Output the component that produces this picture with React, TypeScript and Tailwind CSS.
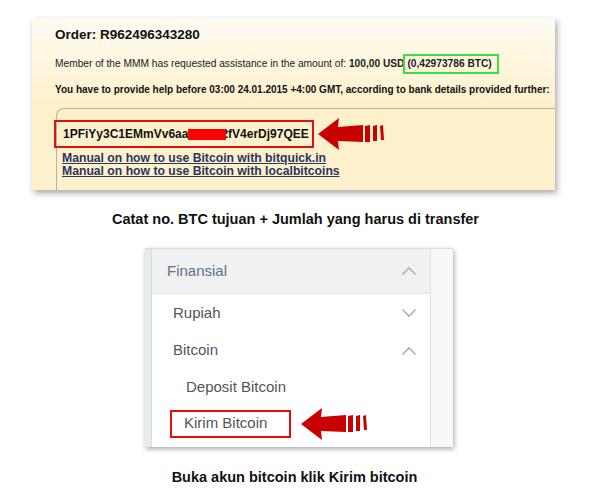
import React from 'react'

// panah merah penunjuk
function RedArrow() {
  return (
    <svg width="70" height="34" viewBox="0 0 70 34">
      <path d="M0 17 L21 1 L20 10 L45 8 L45 25 L20 24 L21 33 Z" fill="#c80000" />
      <path d="M47 9 L52 8 L52 25 L47 25 Z" fill="#c80000" />
      <path d="M55 9 L59 8 L59 24 L55 24 Z" fill="#c80000" />
      <path d="M62 9 L65 8 L66 23 L63 23 Z" fill="#c80000" />
    </svg>
  )
}

function Chevron({ up }: { up?: boolean }) {
  return (
    <svg width="16" height="10" viewBox="0 0 16 10">
      <path
        d={up ? 'M1.5 8.5 L8 2 L14.5 8.5' : 'M1.5 1.5 L8 8 L14.5 1.5'}
        fill="none"
        stroke="#a9b3bd"
        strokeWidth="1.6"
      />
    </svg>
  )
}

export default function App() {
  const arial = { fontFamily: '"Liberation Sans", Arial, sans-serif' }

  return (
    <div className="w-[597px] h-[494px] bg-white overflow-hidden" style={arial}>
      {/* panel order */}
      <div className="ml-[32px] mt-[18px] w-[523px] h-[172px] bg-gradient-to-b from-[#fefbf2] via-[#fdf1cc] to-[#fdf1cd] shadow-[2px_3px_6px_rgba(0,0,0,0.35)] pl-[23px] pt-[9px] overflow-hidden">
        <div className="text-[13.5px] leading-[16px] font-bold text-[#111]">Order: R962496343280</div>
        <div className="mt-[11px] h-[20px] flex items-center text-[10.2px] text-[#222] whitespace-nowrap">
          <span>Member of the MMM has requested assistance in the amount of:&nbsp;</span>
          <span className="font-bold">100,00 USD</span>
          <span className="font-bold border-2 border-[#3ee03e] h-[20px] flex items-center pl-[2px] pr-[5px] -ml-[1px]">(0,42973786 BTC)</span>
        </div>
        <div className="mt-[8px] text-[10px] leading-[16px] font-bold text-[#111] whitespace-nowrap">
          You have to provide help before 03:00 24.01.2015 +4:00 GMT, according to bank details provided further:
        </div>
        <div className="mt-[10px] ml-[1px] h-[100px] border-t border-l border-[#b9b2a2] rounded-tl-[8px] pt-[8px]">
          <div className="flex items-center">
            <div className="-ml-[3px] w-[260px] h-[28px] border-2 border-[#e01010] flex items-center pl-[7px] text-[12px] font-bold text-[#111] whitespace-nowrap">
              <span>1PFiYy3C1EMmVv6aa</span>
              <span className="relative z-10 inline-block w-[38px] h-[11px] bg-[#ff0000] -mr-[5px]" />
              <span>2fV4erDj97QEE</span>
            </div>
            <div className="ml-[4px]">
              <RedArrow />
            </div>
          </div>
          <div className="mt-[1px] ml-[5px] text-[12.2px] leading-[13px] font-bold text-[#2b3560] underline">
            <div>Manual on how to use Bitcoin with bitquick.in</div>
            <div>Manual on how to use Bitcoin with localbitcoins</div>
          </div>
        </div>
      </div>

      <div className="mt-[21px] text-center pr-[6px] text-[14.5px] leading-[17px] font-bold text-[#111]">
        Catat no. BTC tujuan + Jumlah yang harus di transfer
      </div>

      {/* panel menu */}
      <div className="ml-[145px] mt-[20px] w-[308px] h-[199px] flex shadow-[1px_2px_5px_rgba(0,0,0,0.35)] border-t border-[#ddd]">
        <div className="w-[7px] bg-[#e6ebf0] border-r border-[#d6dce2]" />
        <div className="w-[278px] bg-white flex flex-col">
          <div className="h-[45px] bg-[#f1f1f1] flex items-center justify-between pl-[15px] pr-[13px] border-b border-[#e4e4e4]">
            <span className="text-[15px] text-[#5b7189]">Finansial</span>
            <Chevron up />
          </div>
          <div className="h-[38px] flex items-center justify-between pl-[21px] pr-[13px]">
            <span className="text-[15px] text-[#555]">Rupiah</span>
            <Chevron />
          </div>
          <div className="h-[37px] flex items-center justify-between pl-[21px] pr-[13px]">
            <span className="text-[15px] text-[#555]">Bitcoin</span>
            <Chevron up />
          </div>
          <div className="h-[36px] flex items-center pl-[34px]">
            <span className="text-[15px] text-[#555]">Deposit Bitcoin</span>
          </div>
          <div className="h-[37px] flex items-center pl-[18px]">
            <div className="w-[121px] h-[28px] border-2 border-[#e01010] flex items-center pl-[12px] text-[15px] text-[#555]">
              Kirim Bitcoin
            </div>
            <div className="ml-[10px]">
              <RedArrow />
            </div>
          </div>
        </div>
        <div className="flex-1 bg-[#f8f8f8] border-l border-[#e2e2e2]" />
      </div>

      <div className="mt-[22px] text-center pr-[8px] text-[14.5px] leading-[17px] font-bold text-[#111]">
        Buka akun bitcoin klik Kirim bitcoin
      </div>
    </div>
  )
}
